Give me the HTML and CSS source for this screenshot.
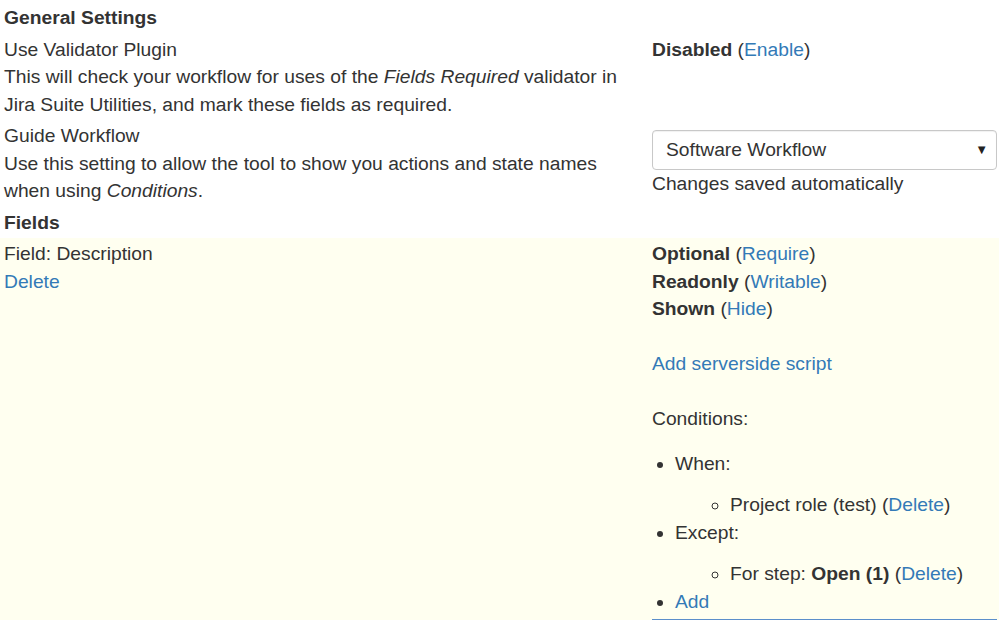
FILE: index.html
```html
<!DOCTYPE html>
<html>
<head>
<meta charset="utf-8">
<link rel="stylesheet" href="styles.css">
</head>
<body>
<div class="settings">
  <div class="row">
    <div class="cell left"><strong>General Settings</strong></div>
  </div>
  <div class="row">
    <div class="cell left">
      <div>Use Validator Plugin</div>
      <div>This will check your workflow for uses of the <em>Fields Required</em> validator in Jira Suite Utilities, and mark these fields as required.</div>
    </div>
    <div class="cell right">
      <strong>Disabled</strong> (<a href="#">Enable</a>)
    </div>
  </div>
  <div class="row">
    <div class="cell left">
      <div>Guide Workflow</div>
      <div>Use this setting to allow the tool to show you actions and state names when using <em>Conditions</em>.</div>
    </div>
    <div class="cell right middle">
      <div class="select">
        <span>Software Workflow</span>
        <span class="caret">&#9660;</span>
      </div>
      <div>Changes saved automatically</div>
    </div>
  </div>
  <div class="row">
    <div class="cell left"><strong>Fields</strong></div>
  </div>
  <div class="row field">
    <div class="cell left">
      <div>Field: Description</div>
      <div><a href="#">Delete</a></div>
    </div>
    <div class="cell right">
      <div><strong>Optional</strong> (<a href="#">Require</a>)</div>
      <div><strong>Readonly</strong> (<a href="#">Writable</a>)</div>
      <div><strong>Shown</strong> (<a href="#">Hide</a>)</div>
      <div class="gap"><a href="#">Add serverside script</a></div>
      <div class="gap">Conditions:</div>
      <ul class="conds">
        <li>When:
          <ul class="sub">
            <li>Project role (test) (<a href="#">Delete</a>)</li>
          </ul>
        </li>
        <li>Except:
          <ul class="sub">
            <li>For step: <strong>Open (1)</strong> (<a href="#">Delete</a>)</li>
          </ul>
        </li>
        <li><a href="#">Add</a></li>
      </ul>
      <div class="editor"></div>
    </div>
  </div>
</div>
</body>
</html>
```

FILE: styles.css
```css
html, body {
  margin: 0;
  padding: 0;
  background: #fff;
}
body {
  padding-top: 2px;
  font-family: "Liberation Sans", Arial, sans-serif;
  font-size: 19.25px;
  line-height: 27.5px;
  color: #333;
}
a {
  color: #337ab7;
  text-decoration: none;
}
strong {
  font-weight: bold;
}
.settings {
  display: flex;
  flex-direction: column;
  width: 999px;
}
.row {
  display: flex;
}
.cell {
  padding: 2px 4px;
  box-sizing: border-box;
}
.left {
  width: 648px;
  flex: none;
}
.right {
  flex: 1;
  min-width: 0;
  padding-right: 2px;
}
.middle {
  align-self: center;
}
.field {
  background: #fffff0;
}
.select {
  display: flex;
  align-items: center;
  justify-content: space-between;
  height: 40px;
  box-sizing: border-box;
  border: 1px solid #c8c8c8;
  border-radius: 4px;
  padding: 0 8px 0 13px;
  background: #fff;
  box-shadow: inset 0 1px 1px rgba(0, 0, 0, 0.06);
}
.caret {
  font-size: 13px;
  color: #222;
}
.gap {
  margin-top: 27.5px;
}
.conds {
  margin: 17px 0 0;
  padding-left: 23px;
}
.sub {
  margin: 14px 0 0;
  padding-left: 55px;
  list-style-type: circle;
}
.editor {
  margin-top: 4px;
  height: 20px;
  border-top: 1px solid #5b8fcb;
  background: #fff;
}
```
